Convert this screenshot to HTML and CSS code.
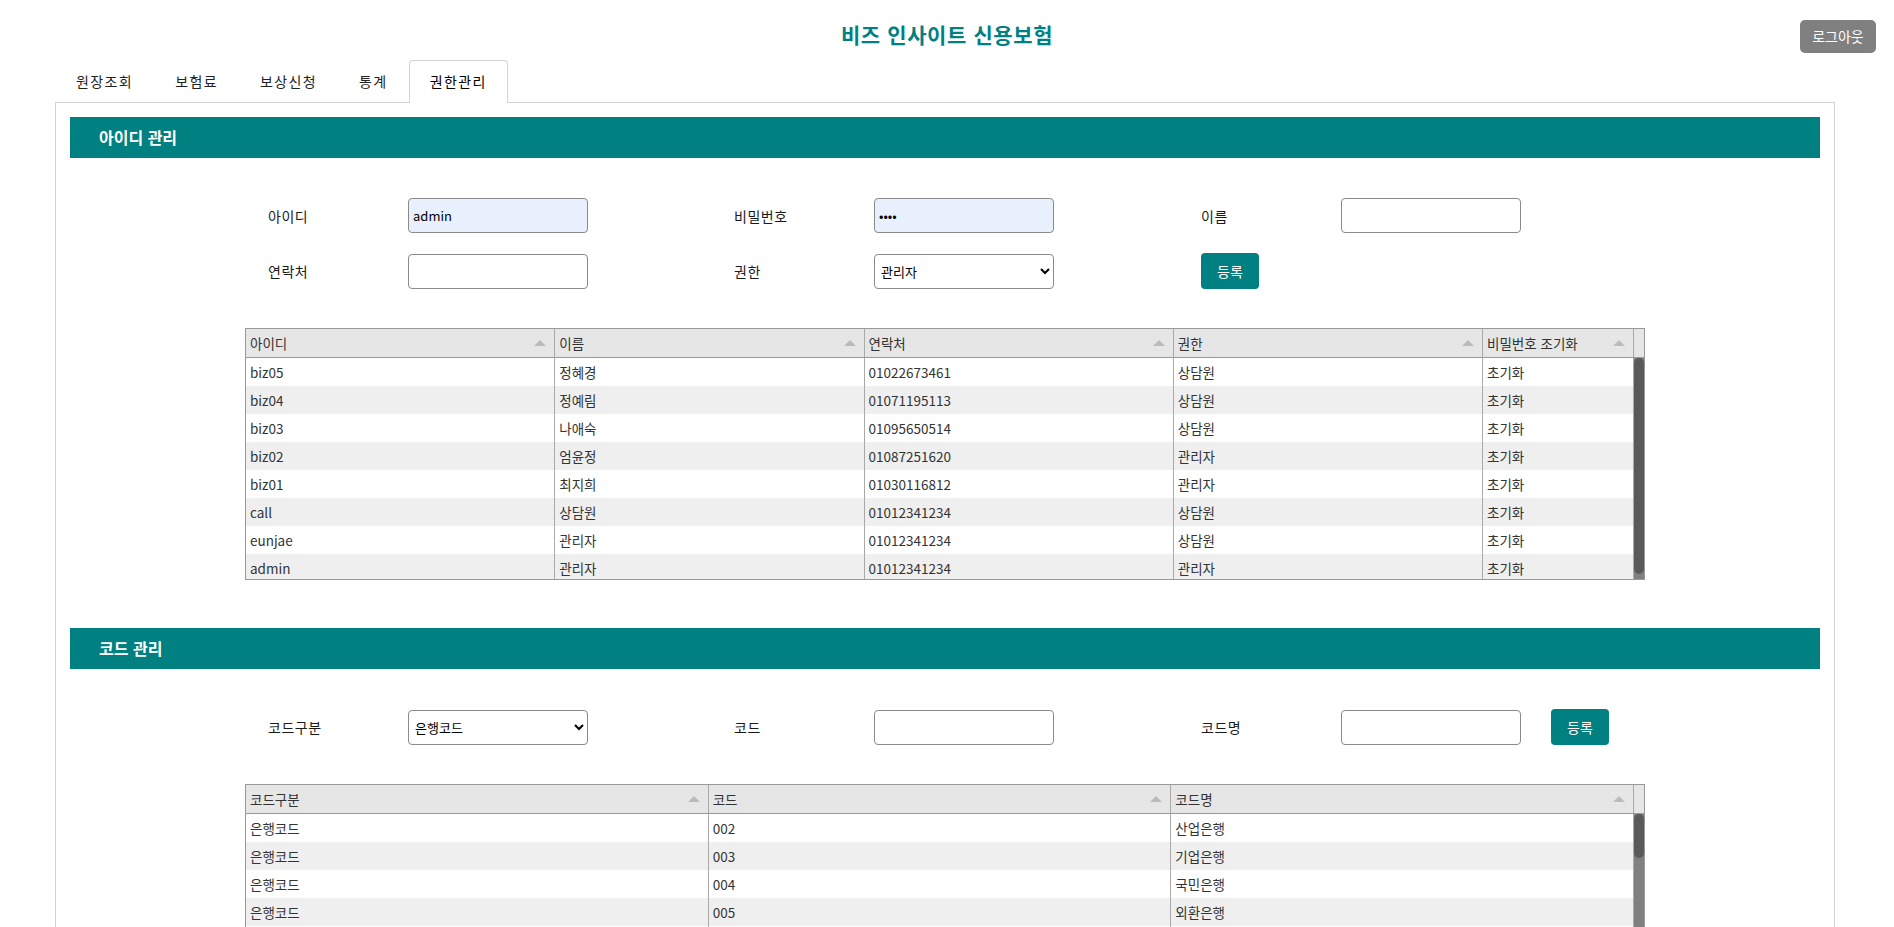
FILE: index.html
```html
<!DOCTYPE html>
<html lang="ko">
<head>
<meta charset="utf-8">
<title>비즈 인사이트 신용보험</title>
<link rel="stylesheet" href="styles.css">
</head>
<body>
<header class="top">
  <h1 class="title">비즈 인사이트 신용보험</h1>
  <button class="logout" type="button">로그아웃</button>
</header>

<nav class="tabs">
  <a class="tab">원장조회</a>
  <a class="tab">보험료</a>
  <a class="tab">보상신청</a>
  <a class="tab">통계</a>
  <a class="tab active">권한관리</a>
</nav>

<main class="panel">
  <section class="sec">
    <h2 class="sec-head">아이디 관리</h2>
    <div class="form">
      <div class="frow">
        <div class="field"><label class="lbl">아이디</label><input class="inp filled" type="text" value="admin"></div>
        <div class="field"><label class="lbl">비밀번호</label><input class="inp filled" type="password" value="1234"></div>
        <div class="field"><label class="lbl">이름</label><input class="inp" type="text"></div>
      </div>
      <div class="frow">
        <div class="field"><label class="lbl">연락처</label><input class="inp" type="text"></div>
        <div class="field"><label class="lbl">권한</label><select class="inp sel"><option>관리자</option><option>상담원</option></select></div>
        <div class="field"><button class="btn" type="button">등록</button></div>
      </div>
    </div>

    <div class="grid g-user">
      <div class="ghead">
        <div class="hc">아이디<span class="arr"></span></div>
        <div class="hc">이름<span class="arr"></span></div>
        <div class="hc">연락처<span class="arr"></span></div>
        <div class="hc">권한<span class="arr"></span></div>
        <div class="hc">비밀번호 조기화<span class="arr"></span></div>
        <div class="hc spacer"></div>
      </div>
      <div class="gbody">
        <div class="rows">
          <div class="gr"><div class="c">biz05</div><div class="c">정혜경</div><div class="c">01022673461</div><div class="c">상담원</div><div class="c">초기화</div></div>
          <div class="gr"><div class="c">biz04</div><div class="c">정예림</div><div class="c">01071195113</div><div class="c">상담원</div><div class="c">초기화</div></div>
          <div class="gr"><div class="c">biz03</div><div class="c">나애숙</div><div class="c">01095650514</div><div class="c">상담원</div><div class="c">초기화</div></div>
          <div class="gr"><div class="c">biz02</div><div class="c">엄윤정</div><div class="c">01087251620</div><div class="c">관리자</div><div class="c">초기화</div></div>
          <div class="gr"><div class="c">biz01</div><div class="c">최지희</div><div class="c">01030116812</div><div class="c">관리자</div><div class="c">초기화</div></div>
          <div class="gr"><div class="c">call</div><div class="c">상담원</div><div class="c">01012341234</div><div class="c">상담원</div><div class="c">초기화</div></div>
          <div class="gr"><div class="c">eunjae</div><div class="c">관리자</div><div class="c">01012341234</div><div class="c">상담원</div><div class="c">초기화</div></div>
          <div class="gr"><div class="c">admin</div><div class="c">관리자</div><div class="c">01012341234</div><div class="c">관리자</div><div class="c">초기화</div></div>
        </div>
        <div class="vscroll"><div class="thumb" style="height: 216px"></div></div>
      </div>
    </div>
  </section>

  <section class="sec sec2">
    <h2 class="sec-head">코드 관리</h2>
    <div class="form">
      <div class="frow">
        <div class="field"><label class="lbl">코드구분</label><select class="inp sel"><option>은행코드</option></select></div>
        <div class="field"><label class="lbl">코드</label><input class="inp" type="text"></div>
        <div class="field"><label class="lbl">코드명</label><input class="inp" type="text"><button class="btn btn-after" type="button">등록</button></div>
      </div>
    </div>

    <div class="grid g-code">
      <div class="ghead">
        <div class="hc">코드구분<span class="arr"></span></div>
        <div class="hc">코드<span class="arr"></span></div>
        <div class="hc">코드명<span class="arr"></span></div>
        <div class="hc spacer"></div>
      </div>
      <div class="gbody">
        <div class="rows">
          <div class="gr"><div class="c">은행코드</div><div class="c">002</div><div class="c">산업은행</div></div>
          <div class="gr"><div class="c">은행코드</div><div class="c">003</div><div class="c">기업은행</div></div>
          <div class="gr"><div class="c">은행코드</div><div class="c">004</div><div class="c">국민은행</div></div>
          <div class="gr"><div class="c">은행코드</div><div class="c">005</div><div class="c">외환은행</div></div>
          <div class="gr"><div class="c">은행코드</div><div class="c">007</div><div class="c">수협은행</div></div>
          <div class="gr"><div class="c">은행코드</div><div class="c">011</div><div class="c">농협은행</div></div>
          <div class="gr"><div class="c">은행코드</div><div class="c">012</div><div class="c">지역농축협</div></div>
          <div class="gr"><div class="c">은행코드</div><div class="c">020</div><div class="c">우리은행</div></div>
        </div>
        <div class="vscroll"><div class="thumb" style="height: 44px"></div></div>
      </div>
    </div>
  </section>
</main>
</body>
</html>
```

FILE: styles.css
```css
* { box-sizing: border-box; }

html, body {
  margin: 0;
  padding: 0;
  background: #fff;
}

body {
  font-family: "Noto Sans CJK KR", "Noto Sans", sans-serif;
  font-size: 14px;
  font-weight: 400;
  color: #000;
  padding-bottom: 40px;
}

.top {
  position: relative;
  height: 60px;
  padding-top: 20px;
  text-align: center;
}

.title {
  margin: 0;
  font-size: 21px;
  line-height: 28px;
  font-weight: bold;
  letter-spacing: 0.6px;
  color: #008080;
}

.logout {
  position: absolute;
  top: 20px;
  right: 18px;
  width: 76px;
  height: 33px;
  padding: 0;
  border: 0;
  border-radius: 5px;
  background: #808080;
  color: #fff;
  font-family: inherit;
  font-size: 14px;
  line-height: 33px;
}

.tabs {
  display: flex;
  margin-left: 55px;
  height: 42px;
  position: relative;
  z-index: 1;
}

.tab {
  height: 43px;
  padding: 0 20px;
  border: 1px solid transparent;
  border-bottom: 0;
  border-radius: 4px 4px 0 0;
  line-height: 41px;
  font-size: 14px;
  letter-spacing: 1.4px;
  color: #222;
}

.tab.active {
  border-color: #d3d3d3;
  background: #fff;
  color: #000;
}

.panel {
  display: block;
  margin-left: 55px;
  width: 1780px;
  border: 1px solid #d3d3d3;
  padding: 14px 14px 60px;
}

.sec2 { margin-top: 48px; }

.sec-head {
  margin: 0;
  height: 41px;
  padding-left: 29px;
  background: #008080;
  color: #fff;
  font-size: 16px;
  font-weight: bold;
  line-height: 41px;
}

.form {
  display: flex;
  flex-direction: column;
  gap: 20px;
  padding: 40px 0 0 198px;
}

.frow {
  display: grid;
  grid-template-columns: 466px 467px auto;
  align-items: center;
  height: 35px;
}

.field {
  display: flex;
  align-items: center;
}

.lbl {
  width: 140px;
  font-size: 14px;
  font-weight: 400;
  line-height: 20px;
  letter-spacing: 0.5px;
  color: #1a1a1a;
}

.inp {
  width: 180px;
  height: 35px;
  border: 1px solid #8a8a8a;
  border-radius: 4px;
  padding: 0 4px;
  font-family: "Noto Sans CJK KR", sans-serif;
  font-size: 13px;
  color: #000;
  background: #fff;
}

.inp.filled { background: #e8f0fe; }

.sel { padding: 0 2px; }

.btn {
  width: 58px;
  height: 36px;
  padding: 0;
  border: 0;
  border-radius: 4px;
  background: #008080;
  color: #fff;
  font-family: inherit;
  font-size: 14px;
}

.btn-after { margin-left: 30px; }

.grid {
  width: 1400px;
  margin: 40px auto 0;
  border: 1px solid #999;
  background: #fff;
  font-size: 13.5px;
  color: #333;
}

.ghead,
.gr {
  display: grid;
}

.g-user .ghead { grid-template-columns: 1fr 1fr 1fr 1fr 151px 10px; }
.g-user .gr { grid-template-columns: 1fr 1fr 1fr 1fr 151px; }
.g-code .ghead { grid-template-columns: 1fr 1fr 1fr 10px; }
.g-code .gr { grid-template-columns: 1fr 1fr 1fr; }

.ghead {
  background: #e6e6e6;
  border-bottom: 1px solid #999;
  height: 29px;
}

.hc {
  position: relative;
  padding-left: 4px;
  line-height: 28px;
  border-right: 1px solid #aaa;
  color: #333;
  white-space: nowrap;
}

.hc.spacer { border-right: 0; }

.arr {
  position: absolute;
  right: 8px;
  top: 11px;
  width: 0;
  height: 0;
  border-left: 6px solid transparent;
  border-right: 6px solid transparent;
  border-bottom: 6px solid #bbb;
}

.gbody {
  display: flex;
  height: 221px;
  overflow: hidden;
  background: #fff;
}

.rows {
  flex: 1;
  min-width: 0;
}

.vscroll {
  width: 10px;
  flex: none;
  background: #808080;
}

.thumb {
  width: 100%;
  background: #5a5a5a;
  border-radius: 5px;
}

.gr { height: 28px; }

.gr:nth-child(even) { background: #efefef; }

.c {
  padding-left: 4px;
  line-height: 28px;
  border-right: 1px solid #aaa;
  white-space: nowrap;
  overflow: hidden;
}
```
